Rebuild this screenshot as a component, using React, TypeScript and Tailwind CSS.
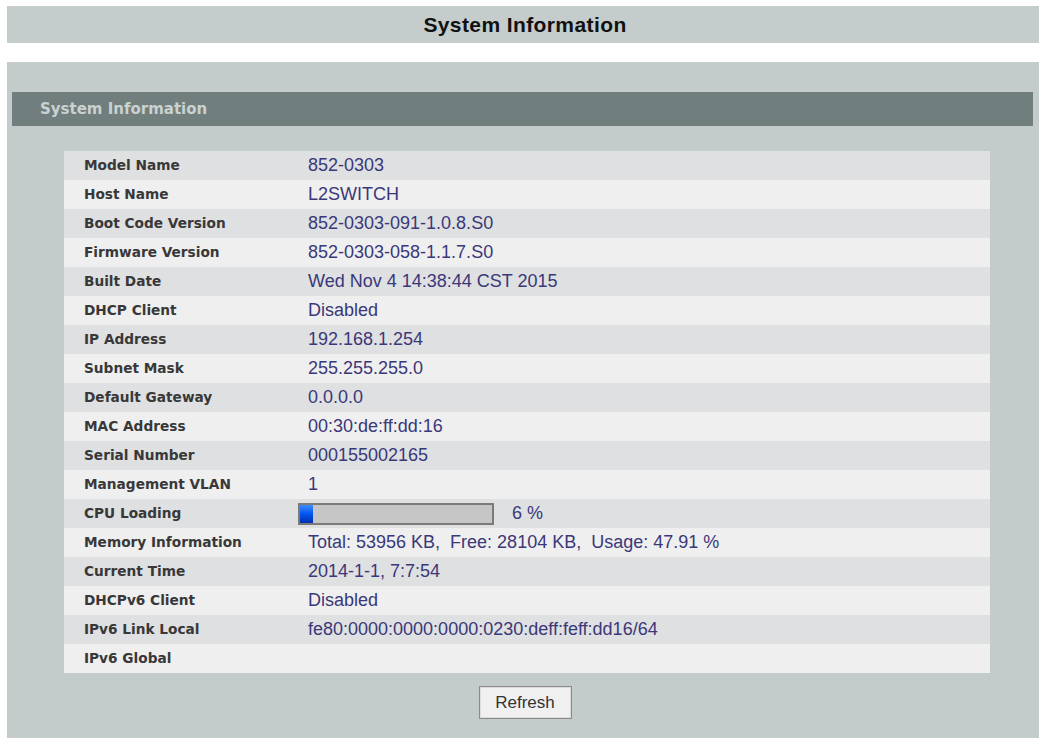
import React from "react";

const rows: [string, string][] = [
  ["Model Name", "852-0303"],
  ["Host Name", "L2SWITCH"],
  ["Boot Code Version", "852-0303-091-1.0.8.S0"],
  ["Firmware Version", "852-0303-058-1.1.7.S0"],
  ["Built Date", "Wed Nov 4 14:38:44 CST 2015"],
  ["DHCP Client", "Disabled"],
  ["IP Address", "192.168.1.254"],
  ["Subnet Mask", "255.255.255.0"],
  ["Default Gateway", "0.0.0.0"],
  ["MAC Address", "00:30:de:ff:dd:16"],
  ["Serial Number", "000155002165"],
  ["Management VLAN", "1"],
  ["CPU Loading", "__CPU__"],
  ["Memory Information", "Total: 53956 KB,\u00a0 Free: 28104 KB,\u00a0 Usage: 47.91 %"],
  ["Current Time", "2014-1-1, 7:7:54"],
  ["DHCPv6 Client", "Disabled"],
  ["IPv6 Link Local", "fe80:0000:0000:0000:0230:deff:feff:dd16/64"],
  ["IPv6 Global", ""],
];

export default function App() {
  return (
    <div className="w-[1046px] h-[742px] bg-white pt-[6px] px-[7px] overflow-hidden">
      <div className="h-[37px] bg-[#c4cccc] flex items-center justify-center">
        <span className="font-['Liberation_Sans',Arial,sans-serif] font-bold text-[21px] text-[#111] tracking-[0.4px] pl-[4px]">
          System Information
        </span>
      </div>
      <div className="mt-[19px] h-[676px] bg-[#c3cbcb] pt-[30px] flex flex-col">
        <div className="ml-[5px] mr-[6px] h-[34px] bg-[#707e7d] flex items-center pl-[28px]">
          <span className="font-['DejaVu_Sans',sans-serif] font-bold text-[15px] text-[#c9d1d1]">
            System Information
          </span>
        </div>
        <div className="mt-[25px] ml-[57px] w-[926px] flex flex-col">
          {rows.map(([label, value], i) => (
            <div
              key={label}
              className={`h-[29px] flex items-center ${i % 2 === 0 ? "bg-[#dfe0e1]" : "bg-[#efefef]"}`}
            >
              <div className="w-[244px] pl-[20px] font-['DejaVu_Sans',sans-serif] font-bold text-[13.7px] text-[#383838]">
                {label}
              </div>
              <div className="flex-1 font-['Liberation_Sans',Arial,sans-serif] text-[18px] text-[#3a3879] whitespace-nowrap">
                {value === "__CPU__" ? (
                  <div className="flex items-center">
                    <div className="-ml-[10px] w-[196px] h-[22px] border-2 border-[#7a7a7a] bg-[#c6c6c6] flex">
                      <div className="w-[13px] h-full bg-gradient-to-b from-[#3b8cff] via-[#0055ee] to-[#0030b0]" />
                    </div>
                    <span className="ml-[18px]">6 %</span>
                  </div>
                ) : (
                  value
                )}
              </div>
            </div>
          ))}
        </div>
        <div className="mt-[13px] flex justify-center pl-[4px]">
          <button className="w-[93px] h-[33px] bg-[#f0f0f0] border border-[#8a8a8a] shadow-[inset_0_0_0_1px_#dcdcdc] font-['Liberation_Sans',Arial,sans-serif] text-[17px] text-[#333]">
            Refresh
          </button>
        </div>
      </div>
    </div>
  );
}
